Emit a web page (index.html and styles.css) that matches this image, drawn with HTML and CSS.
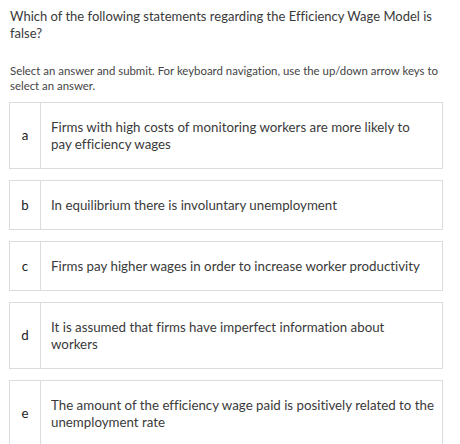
FILE: index.html
```html
<!DOCTYPE html>
<html lang="en">
<head>
    <meta charset="UTF-8">
    <meta name="viewport" content="width=device-width, initial-scale=1.0">
    <title>Question</title>
    <link rel="stylesheet" href="styles.css">
</head>
<body>
    <div class="question">
        <p class="prompt">Which of the following statements regarding the Efficiency Wage Model is false?</p>
        <p class="hint">Select an answer and submit. For keyboard navigation, use the up/down arrow keys to select an answer.</p>

        <ul class="answers" role="radiogroup">
            <li class="answer" role="radio" tabindex="0">
                <span class="letter">a</span>
                <span class="text">Firms with high costs of monitoring workers are more likely to<br>pay efficiency wages</span>
            </li>
            <li class="answer" role="radio" tabindex="-1">
                <span class="letter">b</span>
                <span class="text">In equilibrium there is involuntary unemployment</span>
            </li>
            <li class="answer" role="radio" tabindex="-1">
                <span class="letter">c</span>
                <span class="text">Firms pay higher wages in order to increase worker productivity</span>
            </li>
            <li class="answer" role="radio" tabindex="-1">
                <span class="letter">d</span>
                <span class="text">It is assumed that firms have imperfect information about<br>workers</span>
            </li>
            <li class="answer" role="radio" tabindex="-1">
                <span class="letter">e</span>
                <span class="text">The amount of the efficiency wage paid is positively related to the<br>unemployment rate</span>
            </li>
        </ul>
    </div>
</body>
</html>
```

FILE: styles.css
```css
body {
    margin: 0;
    background: white;
    font-family: Lato, "Open Sans", sans-serif;
    font-variant-ligatures: none;
    color: #333;
}
.question {
    padding: 8px 17px 0 9px;
}
.prompt {
    margin: 0 0 0 1px;
    font-size: 13px;
    line-height: 17px;
    color: #3a3a3a;
}
.hint {
    margin: 21px 0 0 1px;
    font-size: 11.4px;
    line-height: 15px;
    color: #444;
}
.answers {
    list-style: none;
    margin: 9px 0 0;
    padding: 0;
    display: flex;
    flex-direction: column;
    gap: 11px;
}
.answer {
    display: flex;
    border: 1px solid #dadcdf;
    font-size: 13.3px;
    line-height: 17px;
    color: #3a3a3a;
}
.letter {
    width: 30px;
    flex: none;
    display: flex;
    align-items: center;
    justify-content: center;
    border-right: 1px solid #dadcdf;
    color: #222;
}
.text {
    padding: 16px 4px 15px 10px;
}
```
